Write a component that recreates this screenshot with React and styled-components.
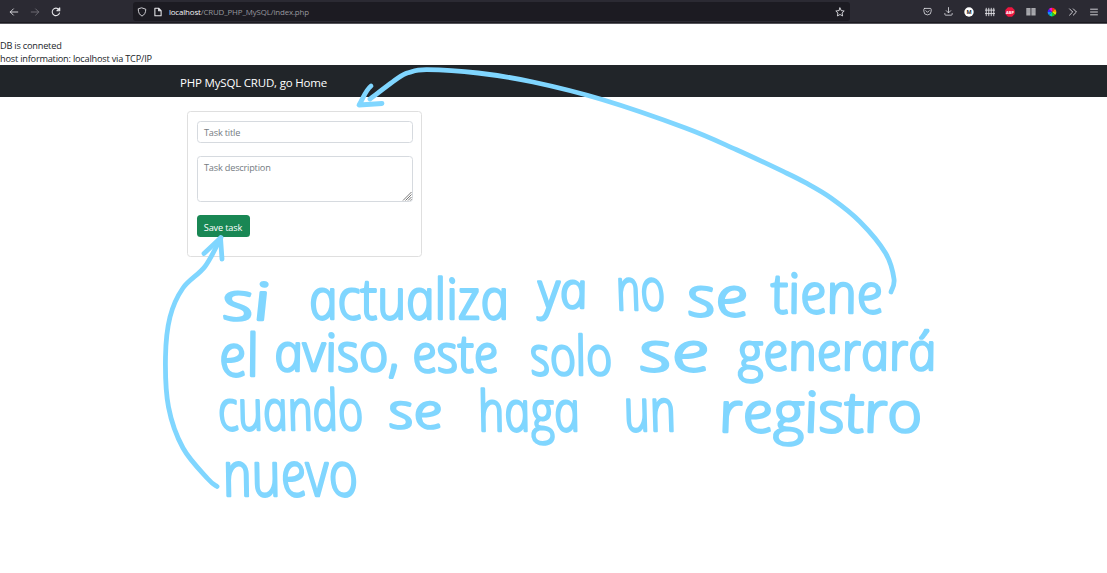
import React from "react";
import styled, { createGlobalStyle } from "styled-components";

const INK = "#80d6ff";

const GlobalStyle = createGlobalStyle`
  * { box-sizing: border-box; }
  html, body { margin: 0; padding: 0; background: #fff; }
  body {
    height: 573px;
    overflow: hidden;
    font-family: "Open Sans", "Noto Sans", sans-serif;
    font-size: 9.2px;
    line-height: 13.8px;
    color: #212529;
  }
`;

const Page = styled.div`
  position: relative;
  width: 1107px;
  height: 573px;
  overflow: hidden;
`;

const Toolbar = styled.header`
  display: flex;
  align-items: center;
  height: 24px;
  padding: 0 3px 0 4px;
  background: #2b2a33;
  border-bottom: 1px solid #55545b;
  box-shadow: inset 0 -1px 0 #1b1a20;
`;

const ToolButton = styled.span`
  display: flex;
  align-items: center;
  justify-content: center;
  flex: none;
  width: 20.8px;
  height: 20px;
  color: ${(p) => (p.$dim ? "#75747b" : "#e6e6ea")};
`;

const AddressBar = styled.div`
  display: flex;
  align-items: center;
  width: 717px;
  height: 19px;
  margin-left: 67px;
  padding: 0 5px 0 4px;
  border-radius: 3px;
  background: #1c1b22;
  color: #e6e6ea;
`;

const AddressIcon = styled.span`
  display: flex;
  width: 11px;
  margin-right: ${(p) => p.$gap || 0}px;
`;

const Url = styled.span`
  flex: 1;
  font-size: 7.9px;
  letter-spacing: -0.14px;
  line-height: 18px;
  color: #98979e;
  white-space: nowrap;
`;

const Host = styled.span`
  color: #f5f5f7;
`;

const ToolGroup = styled.div`
  display: flex;
  margin-left: auto;
`;

const DbStatus = styled.p`
  margin: 0;
  height: 41px;
  padding-top: 14.6px;
  letter-spacing: -0.21px;
`;

const Navbar = styled.nav`
  display: flex;
  align-items: center;
  height: 32.4px;
  padding: 3px 0 0 180px;
  background: #212529;
`;

const Brand = styled.a`
  font-size: 11.5px;
  letter-spacing: -0.19px;
  color: #fff;
  white-space: nowrap;
`;

const Container = styled.main`
  padding: 13.6px 0 0 186.5px;
`;

const Card = styled.form`
  display: flex;
  flex-direction: column;
  align-items: flex-start;
  gap: 13px;
  width: 235.5px;
  height: 146px;
  padding: 9px;
  border: 1px solid #dfdfdf;
  border-radius: 3.5px;
`;

const Field = styled.div`
  position: relative;
  width: 216px;
  height: ${(p) => p.$height}px;
  padding: 4.5px 6.5px;
  border: 1px solid #d6dadf;
  border-radius: 3.5px;
  color: #747b82;
  letter-spacing: -0.2px;
`;

const Grip = styled.svg`
  position: absolute;
  right: 0;
  bottom: 0;
`;

const SaveButton = styled.button`
  width: 53px;
  height: 22px;
  padding: 2px 0 0;
  border: 0;
  border-radius: 3.5px;
  background: #198754;
  color: #fff;
  font: inherit;
  letter-spacing: -0.16px;
`;

const InkLayer = styled.svg`
  position: absolute;
  inset: 0;
  pointer-events: none;
`;

const InkWord = styled.text`
  font-family: "Open Sans", "Noto Sans", sans-serif;
  font-style: italic;
  font-weight: 300;
  fill: ${INK};
  stroke: ${INK};
  stroke-width: 2.7px;
  stroke-linejoin: round;
`;

const Glyph = ({ size = 10, children, width = 1.4 }) => (
  <svg width={size} height={size} viewBox="0 0 16 16" fill="none" stroke="currentColor"
    strokeWidth={width} strokeLinecap="round" strokeLinejoin="round">
    {children}
  </svg>
);

const wheel = ["#ff2222", "#ff9a00", "#d8ef00", "#25d025", "#00d9b0", "#158cff", "#3d20ff", "#e811d8"];

const wedge = (i) => {
  const a = (i * Math.PI) / 4 - Math.PI / 2;
  const b = a + Math.PI / 4;
  return `M8 8L${8 + 7 * Math.cos(a)} ${8 + 7 * Math.sin(a)}A7 7 0 0 1 ${8 + 7 * Math.cos(b)} ${8 + 7 * Math.sin(b)}Z`;
};

// Smooth pen stroke through a list of points (Catmull-Rom to Bezier).
const penStroke = (pts) =>
  pts.slice(1).reduce((d, p, i) => {
    const p0 = pts[i - 1] || pts[i];
    const p1 = pts[i];
    const p3 = pts[i + 2] || p;
    return `${d}C${p1[0] + (p[0] - p0[0]) / 6} ${p1[1] + (p[1] - p0[1]) / 6} ${p[0] - (p3[0] - p1[0]) / 6} ${p[1] - (p3[1] - p1[1]) / 6} ${p[0]} ${p[1]}`;
  }, `M${pts[0][0]} ${pts[0][1]}`);

const upperArrow = [
  [891, 292], [894, 279], [885.5, 253], [860, 221.7], [831, 198], [805.5, 182.7], [783.6, 171.7],
  [736, 149.5], [685.5, 128], [602, 99.5], [533, 82], [478, 73], [427, 69.6], [409, 72.5], [398, 78], [370, 99],
];

const leftArrow = [
  [217, 486.5], [208, 479], [183, 448], [168.5, 407], [165.5, 357], [170, 317], [183, 288], [205, 266.5], [221, 237.5],
];

// text, left edge, right edge, baseline, font size
const words = [
  ["si", 225, 273, 320, 52],
  ["actualiza", 312, 512, 319, 56],
  ["ya", 541, 590, 308, 50],
  ["no", 619, 668, 310, 58],
  ["se", 690, 751, 316, 54],
  ["tiene", 774, 886, 313, 55],
  ["el", 222, 262, 376, 58],
  ["aviso,", 277, 402, 371, 52],
  ["este", 415, 501, 372, 52],
  ["solo", 533, 615, 375, 54],
  ["se", 642, 712, 371, 54],
  ["generará", 740, 939, 370, 52],
  ["cuando", 221, 366, 430, 56],
  ["se", 391, 445, 428, 48],
  ["haga", 481, 583, 431, 56],
  ["un", 627, 679, 431, 59],
  ["registro", 722, 925, 432, 56],
  ["nuevo", 226, 361, 496, 62],
];

export default function App() {
  return (
    <Page>
      <GlobalStyle />
      <Toolbar>
        <ToolButton><Glyph><path d="M14 8H2M7 3L2 8l5 5" /></Glyph></ToolButton>
        <ToolButton $dim><Glyph><path d="M2 8h12M9 3l5 5-5 5" /></Glyph></ToolButton>
        <ToolButton><Glyph width={1.7}><path d="M13.7 9.5A6 6 0 1 1 12.6 4M14 1.5V6H9.5z" /></Glyph></ToolButton>
        <AddressBar>
          <AddressIcon $gap={5}><Glyph size={10}><path d="M8 1.500L14 3.500C14 9 12 12.500 8 14.500C4 12.500 2 9 2 3.500Z" /></Glyph></AddressIcon>
          <AddressIcon $gap={4.5}><Glyph width={1.7}><path d="M3 2h6l4 4v8H3zM9 2v4h4" /></Glyph></AddressIcon>
          <Url><Host>localhost</Host>/CRUD_PHP_MySQL/index.php</Url>
          <Glyph><path d="M8 1.5l2 4.3 4.7.6-3.4 3.2.9 4.7L8 12l-4.2 2.3.9-4.7L1.300 6.400 6 5.800z" /></Glyph>
        </AddressBar>
        <ToolGroup>
          <ToolButton><Glyph size={9}><path d="M3 2.500h10a1.500 1.500 0 0 1 1.500 1.500v3.500a6.500 6.500 0 0 1-13 0V4A1.500 1.500 0 0 1 3 2.500zM5 6.500l3 3 3-3" /></Glyph></ToolButton>
          <ToolButton><Glyph size={9}><path d="M8 1v9M4 6.500l4 4 4-4M1.500 11.500v1.500a1.500 1.500 0 0 0 1.500 1.500h10a1.500 1.500 0 0 0 1.500-1.500v-1.500" /></Glyph></ToolButton>
          <ToolButton>
            <svg width="10" height="10" viewBox="0 0 10 10">
              <circle cx="5" cy="5" r="4.700" fill="#fff" />
              <text x="5" y="7" textAnchor="middle" fontSize="5.500" fontWeight="700" fill="#222">M</text>
            </svg>
          </ToolButton>
          <ToolButton><Glyph><path d="M2 2v12M6 2v12M10 2v12M14 2v12M.5 5h15M.5 10.500h15" /></Glyph></ToolButton>
          <ToolButton>
            <svg width="10" height="10" viewBox="0 0 10 10">
              <path d="M3 .3h4L9.700 3v4L7 9.700H3L.3 7V3z" fill="#ed1740" />
              <text x="5" y="6.500" textAnchor="middle" fontSize="4" fontWeight="700" fill="#fff">ABP</text>
            </svg>
          </ToolButton>
          <ToolButton>
            <svg width="10" height="10" viewBox="0 0 10 10" fill="#a9a9ae">
              <path d="M.3 1h4.200v7.500H.3zM5.400 1h4.200v7.500H5.400z" />
              <path d="M1 3h3M1 5h3M6 3h3M6 5h3" stroke="#8b8b91" strokeWidth=".4" />
            </svg>
          </ToolButton>
          <ToolButton>
            <svg width="10" height="10" viewBox="0 0 16 16">
              {wheel.map((c, i) => <path key={c} d={wedge(i)} fill={c} />)}
            </svg>
          </ToolButton>
          <ToolButton><Glyph><path d="M2.500 3l5 5-5 5M8.500 3l5 5-5 5" /></Glyph></ToolButton>
          <ToolButton><Glyph><path d="M2.500 3.500h11M2.500 8h11M2.500 12.500h11" /></Glyph></ToolButton>
        </ToolGroup>
      </Toolbar>
      <DbStatus>
        DB is conneted
        <br />
        host information: localhost via TCP/IP
      </DbStatus>
      <Navbar>
        <Brand>PHP MySQL CRUD, go Home</Brand>
      </Navbar>
      <Container>
        <Card>
          <Field $height={22}>Task title</Field>
          <Field $height={46.5}>
            Task description
            <Grip width="10" height="10" viewBox="0 0 10 10">
              <path d="M1 9.500L9.500 1M3.500 9.500l6-6M6 9.500L9.500 6M8.300 9.500l1.200-1.200" stroke="#777" strokeWidth="1" />
            </Grip>
          </Field>
          <SaveButton type="button">Save task</SaveButton>
        </Card>
      </Container>
      <InkLayer width="1107" height="573" viewBox="0 0 1107 573">
        <g fill="none" stroke={INK} strokeWidth="4.800" strokeLinecap="round" strokeLinejoin="round">
          <path d={penStroke(upperArrow)} />
          <path d="M371 86C365 91 363 99 359 105L382 103.500" />
          <path d={penStroke(leftArrow)} />
          <path d="M204 253.500L220.500 238L222 259" />
        </g>
        {words.map(([word, left, right, baseline, size]) => (
          <InkWord
            key={`${word}-${left}`}
            transform={`translate(${left} ${baseline}) skewX(11)`}
            fontSize={size}
            textLength={right - left}
            lengthAdjust="spacingAndGlyphs"
          >
            {word}
          </InkWord>
        ))}
      </InkLayer>
    </Page>
  );
}
